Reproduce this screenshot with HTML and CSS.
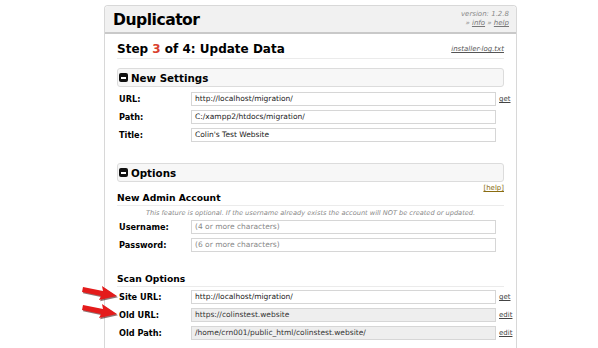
FILE: index.html
```html
<!DOCTYPE html>
<html>
<head>
<meta charset="utf-8">
<link rel="stylesheet" href="styles.css">
</head>
<body>
<div class="frame">
  <div class="header">
    <div class="brand">Duplicator</div>
    <div class="ver">
      <div>version: 1.2.8</div>
      <div>&raquo; <a>info</a> &raquo; <a>help</a></div>
    </div>
  </div>
  <div class="content">
    <div class="step">
      <div class="step-title">Step <span class="num">3</span> of 4: Update Data</div>
      <a class="log">installer-log.txt</a>
    </div>

    <div class="sec-head"><span class="minus"></span>New Settings</div>
    <div class="form first">
      <label>URL:</label><div class="inp">http://localhost/migration/</div><a class="lnk">get</a>
      <label>Path:</label><div class="inp">C:/xampp2/htdocs/migration/</div><span></span>
      <label>Title:</label><div class="inp">Colin's Test Website</div><span></span>
    </div>

    <div class="sec-head opt"><span class="minus"></span>Options</div>
    <div class="helprow"><a>[help]</a></div>
    <div class="sub">New Admin Account</div>
    <div class="note">This feature is optional. If the username already exists the account will NOT be created or updated.</div>
    <div class="form">
      <label>Username:</label><div class="inp ph">(4 or more characters)</div><span></span>
      <label>Password:</label><div class="inp ph">(6 or more characters)</div><span></span>
    </div>

    <div class="sub scan">Scan Options</div>
    <div class="form">
      <label class="arrowed">Site URL:<svg class="arrow" width="38" height="18" viewBox="0 0 38 18"><path d="M2 3 L22 7 L21 2 L36 12 L18 16 L20 12 L1 8 Z" fill="#3a0000" opacity="0.55" transform="translate(1 1.2)"/><path d="M2 3 L22 7 L21 2 L36 12 L18 16 L20 12 L1 8 Z" fill="#e41b1b"/></svg></label><div class="inp">http://localhost/migration/</div><a class="lnk">get</a>
      <label class="arrowed">Old URL:<svg class="arrow" width="38" height="18" viewBox="0 0 38 18"><path d="M2 3 L22 7 L21 2 L36 12 L18 16 L20 12 L1 8 Z" fill="#3a0000" opacity="0.55" transform="translate(1 1.2)"/><path d="M2 3 L22 7 L21 2 L36 12 L18 16 L20 12 L1 8 Z" fill="#e41b1b"/></svg></label><div class="inp ro">https://colinstest.website</div><a class="lnk">edit</a>
      <label>Old Path:</label><div class="inp ro">/home/crn001/public_html/colinstest.website/</div><a class="lnk">edit</a>
    </div>
  </div>
</div>
</body>
</html>
```

FILE: styles.css
```css
html, body {
  margin: 0;
  padding: 0;
  background: #fff;
  font-family: "DejaVu Sans", Verdana, sans-serif;
  color: #000;
  overflow: hidden;
}
.frame {
  margin: 5px 0 0 104px;
  width: 411px;
  height: 343px;
  border: 1px solid #d8d8d8;
  border-bottom: none;
  border-radius: 4px 4px 0 0;
}
.header {
  display: flex;
  justify-content: space-between;
  align-items: flex-start;
  height: 26px;
  background: #f1f1f1;
  border-bottom: 2px solid #c9c9c9;
  border-radius: 4px 4px 0 0;
}
.brand {
  font-weight: bold;
  font-size: 15.6px;
  letter-spacing: -0.5px;
  padding: 4px 0 0 8px;
  line-height: 20px;
}
.ver {
  font-size: 7px;
  font-style: italic;
  color: #888;
  text-align: right;
  padding: 4px 7px 0 0;
  line-height: 9px;
}
.ver a { text-decoration: underline; color: #777; }
.content {
  padding: 0 12px;
}
.step {
  display: flex;
  justify-content: space-between;
  align-items: center;
  margin-top: 7px;
  padding-bottom: 1px;
  border-bottom: 1px solid #ebebeb;
}
.step-title {
  font-weight: bold;
  font-size: 12px;
  line-height: 16px;
}
.num { color: #d9402e; }
.log {
  font-size: 7px;
  font-style: italic;
  color: #555;
  text-decoration: underline;
}
.sec-head {
  margin-top: 9px;
  height: 17px;
  border: 1px solid #dcdcdc;
  border-radius: 3px;
  background: #f7f7f7;
  display: flex;
  align-items: center;
  font-weight: bold;
  font-size: 10.3px;
  padding-left: 1px;
}
.minus {
  display: inline-block;
  width: 9px;
  height: 9px;
  background: #111;
  border-radius: 2px;
  margin-right: 3px;
  position: relative;
}
.minus::after {
  content: "";
  position: absolute;
  left: 2px;
  right: 2px;
  top: 3.5px;
  height: 2px;
  background: #fff;
}
.form {
  display: grid;
  grid-template-columns: 74px 305px auto;
  row-gap: 4px;
  align-items: center;
  margin-top: 3px;
}
.form.first { margin-top: 5px; }
.form label {
  font-weight: bold;
  font-size: 8.2px;
  padding-left: 2px;
  position: relative;
}
.inp {
  height: 12px;
  border: 1px solid #d6d6d6;
  font-size: 7.5px;
  line-height: 12px;
  padding-left: 3px;
  color: #222;
  background: #fff;
  white-space: nowrap;
}
.inp.ph { color: #888; }
.inp.ro { background: #eeeeee; color: #333; }
.lnk {
  font-size: 7px;
  color: #444;
  text-decoration: underline;
  padding-left: 3px;
}
.sec-head.opt { margin-top: 21px; }
.helprow {
  text-align: right;
  font-size: 7px;
  margin-top: 2px;
  line-height: 8px;
}
.helprow a { color: #8a6d12; text-decoration: underline; }
.sub {
  font-weight: bold;
  font-size: 9.2px;
  line-height: 12px;
  border-bottom: 1px solid #ebebeb;
  padding-bottom: 1px;
}
.note {
  font-size: 6.6px;
  font-style: italic;
  color: #888;
  text-align: center;
  margin-top: 3px;
  line-height: 8px;
}
.sub.scan { margin-top: 21px; }
.arrow {
  position: absolute;
  left: -36px;
  top: -8px;
}
```
